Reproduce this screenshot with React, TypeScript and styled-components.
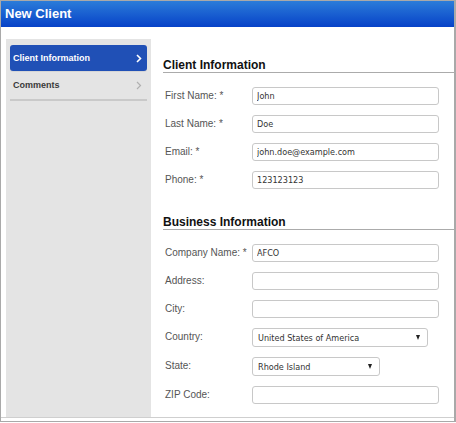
import React, { FC } from 'react';
import styled, { createGlobalStyle } from 'styled-components';

const Global = createGlobalStyle`
  html, body {
    margin: 0;
    padding: 0;
    background: #ffffff;
  }
  * {
    box-sizing: border-box;
  }
`;

const Window = styled.div`
  width: 456px;
  height: 422px;
  border: 1px solid #a9a9a9;
  border-right-width: 2px;
  background: #ffffff;
  display: flex;
  flex-direction: column;
  font-family: 'Liberation Sans', Arial, sans-serif;
`;

const TitleBar = styled.div`
  height: 26px;
  flex: none;
  background: linear-gradient(#2b7cd9, #0742c8);
  color: #ffffff;
  font-weight: bold;
  font-size: 13px;
  line-height: 26px;
  padding-left: 4px;
`;

const Body = styled.div`
  height: 391px;
  flex: none;
  display: flex;
  padding: 12px 0 0 5px;
  border-bottom: 1px solid #cfcfcf;
`;

const Sidebar = styled.div`
  width: 145px;
  flex: none;
  background: #e4e4e4;
  padding: 6px 4px 0 4px;
  display: flex;
  flex-direction: column;
`;

const NavItem = styled.div<{ $active?: boolean }>`
  height: ${(p) => (p.$active ? '26px' : '30px')};
  display: flex;
  align-items: center;
  justify-content: space-between;
  padding: 0 5px 0 3px;
  font-size: 9px;
  font-weight: bold;
  border-radius: ${(p) => (p.$active ? '3px' : '0')};
  background: ${(p) => (p.$active ? '#2050b6' : 'transparent')};
  color: ${(p) => (p.$active ? '#ffffff' : '#3a3a3a')};
  border-bottom: ${(p) => (p.$active ? 'none' : '2px solid #c9c9c9')};
  box-shadow: ${(p) => (p.$active ? '0 1px 0 #d6d6d6' : 'none')};
`;

const Chevron: FC<{ color: string; weight: number }> = ({ color, weight }) => (
  <svg width="6" height="9" viewBox="0 0 6 9">
    <polyline points="1,1 4.5,4.5 1,8" fill="none" stroke={color} strokeWidth={weight} />
  </svg>
);

const Content = styled.div`
  flex: 1;
  padding: 19px 0 0 12px;
`;

const Section = styled.div`
  & + & {
    margin-top: 26px;
  }
`;

const Heading = styled.div`
  font-size: 12px;
  font-weight: bold;
  line-height: 14px;
  color: #111111;
  border-bottom: 1px solid #ababab;
  margin-right: -2px;
`;

const Rows = styled.div`
  display: flex;
  flex-direction: column;
  gap: 10px;
  margin-top: 14px;
  padding-left: 2px;
`;

const Row = styled.div`
  display: flex;
  align-items: flex-start;
`;

const Label = styled.div`
  width: 87px;
  flex: none;
  font-size: 10px;
  line-height: 14px;
  padding-top: 2px;
  color: #555555;
`;

const TextInput = styled.input`
  width: 187px;
  height: 18px;
  border: 1px solid #c8c8c8;
  border-radius: 3px;
  padding: 0 4px;
  font-family: 'DejaVu Sans Condensed', 'DejaVu Sans', sans-serif;
  font-size: 9px;
  color: #333333;
  outline: none;
  background: #ffffff;
`;

const Select = styled.div<{ $width: number }>`
  width: ${(p) => p.$width}px;
  height: 19px;
  border: 1px solid #c8c8c8;
  border-radius: 3px;
  padding: 0 7px 0 5px;
  display: flex;
  align-items: center;
  justify-content: space-between;
  font-family: 'DejaVu Sans Condensed', 'DejaVu Sans', sans-serif;
  font-size: 9px;
  color: #333333;
  background: #ffffff;
`;

const Arrow = styled.span`
  width: 0;
  height: 0;
  border-left: 2.5px solid transparent;
  border-right: 2.5px solid transparent;
  border-top: 5px solid #222222;
`;

type Field = { label: string; value?: string; select?: number };

const clientFields: Field[] = [
  { label: 'First Name: *', value: 'John' },
  { label: 'Last Name: *', value: 'Doe' },
  { label: 'Email: *', value: 'john.doe@example.com' },
  { label: 'Phone: *', value: '123123123' },
];

const businessFields: Field[] = [
  { label: 'Company Name: *', value: 'AFCO' },
  { label: 'Address:', value: '' },
  { label: 'City:', value: '' },
  { label: 'Country:', value: 'United States of America', select: 176 },
  { label: 'State:', value: 'Rhode Island', select: 128 },
  { label: 'ZIP Code:', value: '' },
];

const FormSection: FC<{ title: string; fields: Field[] }> = ({ title, fields }) => (
  <Section>
    <Heading>{title}</Heading>
    <Rows>
      {fields.map((f) => (
        <Row key={f.label}>
          <Label>{f.label}</Label>
          {f.select ? (
            <Select $width={f.select}>
              <span>{f.value}</span>
              <Arrow />
            </Select>
          ) : (
            <TextInput readOnly defaultValue={f.value} />
          )}
        </Row>
      ))}
    </Rows>
  </Section>
);

const App: FC = () => (
  <>
    <Global />
    <Window>
      <TitleBar>New Client</TitleBar>
      <Body>
        <Sidebar>
          <NavItem $active>
            <span>Client Information</span>
            <Chevron color="#ffffff" weight={1.6} />
          </NavItem>
          <NavItem>
            <span>Comments</span>
            <Chevron color="#b0b0b0" weight={1.2} />
          </NavItem>
        </Sidebar>
        <Content>
          <FormSection title="Client Information" fields={clientFields} />
          <FormSection title="Business Information" fields={businessFields} />
        </Content>
      </Body>
    </Window>
  </>
);

export default App;
